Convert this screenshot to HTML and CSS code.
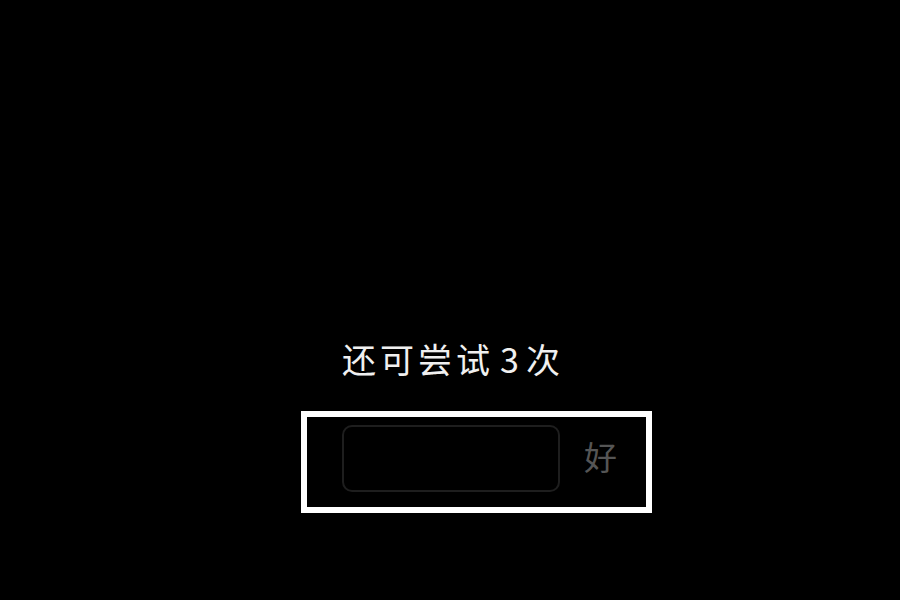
FILE: index.html
```html
<!DOCTYPE html>
<html lang="zh">
<head>
<meta charset="utf-8">
<link rel="stylesheet" href="styles.css">
</head>
<body>
<div class="screen">
  <div class="title">还可尝试<span class="num">3</span>次</div>
  <div class="frame">
    <div class="field"></div>
    <div class="ok">好</div>
  </div>
</div>
</body>
</html>
```
FILE: styles.css
```css
html, body {
  margin: 0;
  padding: 0;
  background: #000;
  width: 900px;
  height: 600px;
  overflow: hidden;
}
.screen {
  display: flex;
  flex-direction: column;
  align-items: flex-start;
  padding-top: 335px;
  font-family: "Noto Sans CJK SC", "Noto Sans", sans-serif;
}
.title {
  margin-left: 342px;
  color: #f0f0f0;
  font-size: 34px;
  line-height: 48px;
  letter-spacing: 4px;
}
.num {
  margin-left: 6px;
  margin-right: 3px;
}
.frame {
  margin-top: 28px;
  margin-left: 301px;
  width: 339px;
  height: 90px;
  border: 6px solid #fff;
  display: flex;
  align-items: flex-start;
  box-sizing: content-box;
}
.field {
  margin-top: 8px;
  margin-left: 35px;
  width: 214px;
  height: 63px;
  border: 2px solid #1e1e1e;
  border-radius: 10px;
}
.ok {
  margin-top: 19px;
  margin-left: 24px;
  color: #555;
  font-size: 33px;
  line-height: 40px;
}
```
